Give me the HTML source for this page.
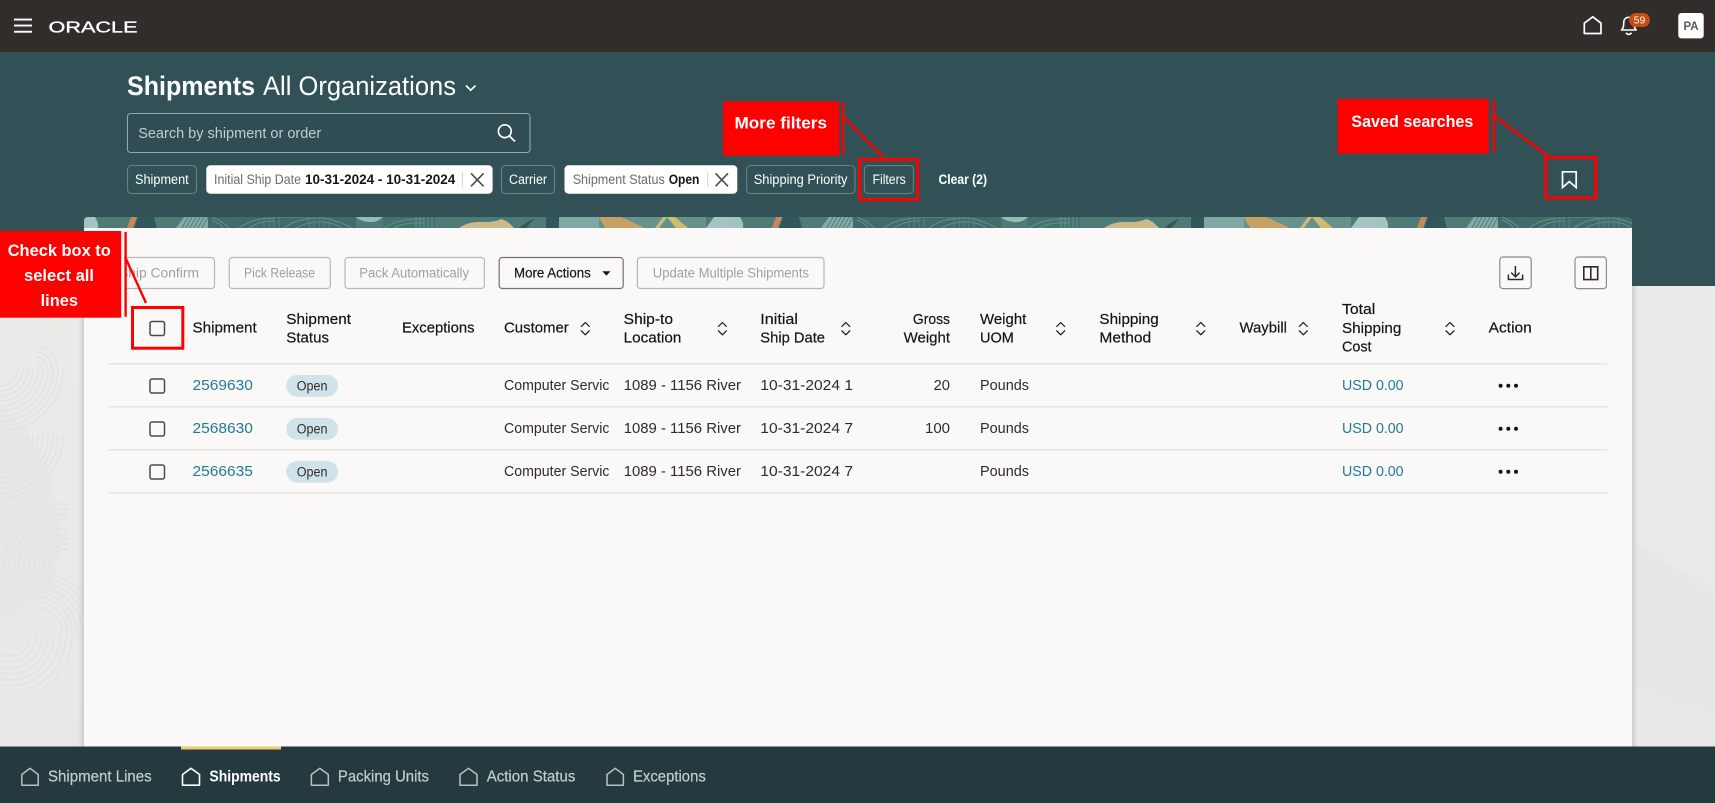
<!DOCTYPE html>
<html lang="en"><head><meta charset="utf-8"><title>Shipments</title>
<style>
html,body{margin:0;padding:0;width:1715px;height:803px;overflow:hidden;background:#ecebe9}
svg{display:block}
text{font-family:"Liberation Sans",sans-serif;white-space:pre}
.h{font-size:15.2px;fill:#161513;stroke:#161513;stroke-width:.2}
.d{font-size:15.2px;fill:#2f2c2a}
.l{font-size:15.2px;fill:#227a96}
.c{font-size:14.2px;fill:#fff}
.g{font-size:14.2px;fill:#6f6c69}
.b{font-size:14.2px;fill:#161513;font-weight:bold}
.dis{font-size:14.2px;fill:#a3a09d}
.btn{fill:none;stroke:#b9b7b4;stroke-width:1.2}
.chip{fill:none;stroke:#67827f;stroke-width:1.1}
.red{font-size:17px;font-weight:bold;fill:#fff}
.rb{fill:none;stroke:#f00;stroke-width:3}
.rl{stroke:#f00;stroke-width:2.4;fill:none}
.s{fill:none;stroke:#161513;stroke-width:1.2;stroke-linecap:round;stroke-linejoin:round}
.cb{fill:none;stroke:#4c4a48;stroke-width:1.5}
.t{font-size:15.6px;fill:#c3cdce;stroke:#c3cdce;stroke-width:.2}
.ti{fill:none;stroke:#b6c3c4;stroke-width:1.5;stroke-linejoin:round}
.o{fill:#d0e2ea}
.p{font-size:14.2px;fill:#2f2c2a}
.arc{fill:none;stroke:#e4e3e1;stroke-width:1.6}
</style></head><body>
<svg width="1715" height="803" viewBox="0 0 1715 803" xmlns="http://www.w3.org/2000/svg">
<defs>
<linearGradient id="bg" x1="0" x2="0" y1="0" y2="1"><stop offset="0" stop-color="#eeedeb"/><stop offset="1" stop-color="#e9e8e6"/></linearGradient>
<linearGradient id="sl" x1="0" x2="1" y1="0" y2="0"><stop offset="0" stop-color="#d0cfcd" stop-opacity="0"/><stop offset="1" stop-color="#cfcecc"/></linearGradient>
<linearGradient id="sr" x1="1" x2="0" y1="0" y2="0"><stop offset="0" stop-color="#d0cfcd" stop-opacity="0"/><stop offset="1" stop-color="#cfcecc"/></linearGradient>
<clipPath id="a0"><rect x="36" y="347" width="48" height="21"/></clipPath>
<clipPath id="a1"><rect x="0" y="368" width="68" height="66"/></clipPath>
<clipPath id="a2"><rect x="0" y="435" width="68" height="67"/></clipPath>
<clipPath id="a3"><rect x="0" y="503" width="68" height="65"/></clipPath>
<clipPath id="a4"><rect x="36" y="570" width="48" height="65"/></clipPath>
<clipPath id="a5"><rect x="0" y="636" width="84" height="52"/></clipPath>
<clipPath id="cs"><rect x="500" y="375" width="108.6" height="110"/></clipPath>
<clipPath id="st"><path d="M84 228V221q0-4 4-4H1628q4 0 4 4V228Z"/></clipPath>
<pattern id="tile" x="84" y="217" width="645" height="11" patternUnits="userSpaceOnUse">
<rect width="645" height="11" fill="#527f7a"/>
<path d="M0 0H11Q15 6 14 11H0Z" fill="#b9d5d3"/>
<path d="M47 0H53L49 11H43Z" fill="#e58e55"/>
<path d="M54 0H70L73 11H50Z" fill="#2f5155"/>
<path d="M92 11L100 0H124V11Z" fill="#93b8b5"/>
<path d="M98 11l6-11M102 11l6-11M106 11l6-11M110 11l6-11M114 11l6-11M118 11l6-11" stroke="#55817d" stroke-width="1"/>
<rect x="124" y="0" width="148" height="11" fill="#3f6d6b"/>
<path d="M128 0Q140 5 145 11M128 3Q136 6 139 11M155 11Q168 1 190 1M165 11Q175 4 190 4M190 0H225M200 11Q215 0 240 1Q255 4 268 11M212 11Q225 4 240 5Q250 6 258 11" stroke="#6c9692" fill="none" stroke-width="1"/>
<path d="M180 0v11M185 0v11M190 0v11M195 0v11M225 0v11M230 0v11M235 0v11M240 0v11M245 0v11" stroke="#5f8c88" stroke-width=".8"/>
<path d="M272 0H299Q293 6 285 5Q276 4 272 0Z" fill="#a9cdca"/>
<rect x="299" y="0" width="52" height="11" fill="#44726f"/>
<path d="M300 11Q315 1 340 2M310 11Q320 5 340 6" stroke="#6c9692" fill="none"/>
<path d="M332 0v11M336 0v11M340 0v11M344 0v11M348 0v11" stroke="#7aa29e" stroke-width=".8"/>
<path d="M375 11Q385 4 400 5Q412 5 417 2Q423 3 430 11Z" fill="#eccb91"/>
<path d="M435 11Q445 3 450 2L453 11Z" fill="#2f5155"/>
<path d="M452 0H463V11H442Z" fill="#527f7a"/>
<rect x="462" y="0" width="13" height="11" fill="#2f5155"/>
<rect x="475" y="0" width="40" height="11" fill="#8fb4b1"/>
<rect x="515" y="0" width="107" height="11" fill="#6f9a93"/>
<path d="M515 0H537L557 9L560 11H521Z" fill="#e3ad62"/>
<path d="M579 0H583L575 11H571Z" fill="#f0cc71"/>
<path d="M583 0H591L604 11H592Z" fill="#f0cc71"/>
<path d="M622 11L630 0H645V11Z" fill="#bcd8d8"/>
</pattern>
</defs>

<!-- page background -->
<rect width="1715" height="803" fill="url(#bg)"/>
<path d="M0 405L30 435L48 470L56 500L62 540L50 590L20 615L0 625Z" fill="#e8e7e5"/>
<g class="arc">
<g clip-path="url(#a0)"><circle cx="36" cy="368" r="6"/><circle cx="36" cy="368" r="11"/><circle cx="36" cy="368" r="16"/><circle cx="36" cy="368" r="21"/></g>
<g clip-path="url(#a1)"><circle cx="0" cy="368" r="18"/><circle cx="0" cy="368" r="23"/><circle cx="0" cy="368" r="28"/><circle cx="0" cy="368" r="33"/><circle cx="0" cy="368" r="38"/><circle cx="0" cy="368" r="43"/><circle cx="0" cy="368" r="48"/><circle cx="0" cy="368" r="53"/><circle cx="0" cy="368" r="58"/><circle cx="0" cy="368" r="63"/></g>
<g clip-path="url(#a2)"><circle cx="0" cy="435" r="18"/><circle cx="0" cy="435" r="23"/><circle cx="0" cy="435" r="28"/><circle cx="0" cy="435" r="33"/><circle cx="0" cy="435" r="38"/><circle cx="0" cy="435" r="43"/><circle cx="0" cy="435" r="48"/><circle cx="0" cy="435" r="53"/><circle cx="0" cy="435" r="58"/><circle cx="0" cy="435" r="63"/></g>
<g clip-path="url(#a3)"><circle cx="67" cy="567" r="18"/><circle cx="67" cy="567" r="23"/><circle cx="67" cy="567" r="28"/><circle cx="67" cy="567" r="33"/><circle cx="67" cy="567" r="38"/><circle cx="67" cy="567" r="43"/><circle cx="67" cy="567" r="48"/><circle cx="67" cy="567" r="53"/><circle cx="67" cy="567" r="58"/><circle cx="67" cy="567" r="63"/></g>
<g clip-path="url(#a4)"><circle cx="36" cy="633" r="26"/><circle cx="36" cy="633" r="31"/><circle cx="36" cy="633" r="36"/><circle cx="36" cy="633" r="41"/><circle cx="36" cy="633" r="46"/><circle cx="36" cy="633" r="51"/><circle cx="36" cy="633" r="56"/><circle cx="36" cy="633" r="61"/></g>
<g clip-path="url(#a5)"><circle cx="10" cy="636" r="20"/><circle cx="10" cy="636" r="26"/><circle cx="10" cy="636" r="32"/><circle cx="10" cy="636" r="38"/><circle cx="10" cy="636" r="44"/><circle cx="10" cy="636" r="50"/><circle cx="10" cy="636" r="56"/><circle cx="10" cy="636" r="62"/></g>
</g>
<path d="M1632 540L1715 593V713Q1670 708 1632 683Z" fill="#e8e7e5"/>

<!-- header bands -->
<rect y="52" width="1715" height="234" fill="#325156"/>
<rect width="1715" height="52" fill="#312d2a"/>
<g fill="#fff"><rect x="14" y="18.6" width="18" height="1.9"/><rect x="14" y="24.6" width="18" height="1.9"/><rect x="14" y="30.8" width="18" height="1.9"/></g>
<text x="48.5" y="32.3" font-size="16" fill="#fff" stroke="#fff" stroke-width=".35" textLength="89" lengthAdjust="spacingAndGlyphs">ORACLE</text>
<path d="M1584.3 33.5V23.2L1592.8 16.8L1601 23.2V33.5Z" fill="none" stroke="#fff" stroke-width="1.7" stroke-linejoin="round"/>
<path d="M1621.5 30C1623.5 28 1623.7 26 1623.7 23C1623.7 19.5 1625.5 17.3 1628.7 17.3C1632 17.3 1634 19.5 1634 23C1634 26 1634.2 28 1636.2 30Z" fill="none" stroke="#fff" stroke-width="1.6" stroke-linejoin="round"/>
<path d="M1626 32.8Q1628.7 36 1631.5 32.8" fill="none" stroke="#fff" stroke-width="1.6"/>
<rect x="1629" y="13" width="21" height="14" rx="7" fill="#c84b12"/>
<text x="1639.5" y="23.6" font-size="10.5" fill="#fff" text-anchor="middle">59</text>
<rect x="1678.3" y="13" width="25.4" height="25.4" rx="3" fill="#fff"/>
<text x="1691" y="30" font-size="11.5" font-weight="bold" fill="#5c5a58" text-anchor="middle">PA</text>

<!-- title -->
<text x="127" y="95" font-size="26.5" font-weight="bold" fill="#fff" textLength="128" lengthAdjust="spacingAndGlyphs">Shipments</text>
<text x="263" y="95" font-size="26.5" fill="#fff" textLength="193" lengthAdjust="spacingAndGlyphs">All Organizations</text>
<path d="M466 85.5L470.7 90.2L475.5 85.5" fill="none" stroke="#fff" stroke-width="1.6"/>

<!-- search -->
<rect x="127.5" y="113.5" width="402.5" height="39" rx="3" fill="#2f4d52" stroke="#93a9ab" stroke-width="1.1"/>
<text x="138.2" y="138" font-size="15.2" fill="#c1cdce" textLength="183" lengthAdjust="spacingAndGlyphs">Search by shipment or order</text>
<circle cx="504.8" cy="131.2" r="6.4" fill="none" stroke="#fff" stroke-width="1.7"/>
<path d="M509.4 136L515 141.5" stroke="#fff" stroke-width="1.7" fill="none"/>

<!-- chips -->
<rect class="chip" x="127.5" y="165.5" width="69" height="28" rx="4"/>
<text class="c" x="135" y="184" textLength="53.7" lengthAdjust="spacingAndGlyphs">Shipment</text>
<rect x="206.3" y="165.3" width="286.3" height="28.4" rx="4" fill="#fff"/>
<text class="g" x="214" y="184" textLength="87" lengthAdjust="spacingAndGlyphs">Initial Ship Date</text>
<text class="b" x="305" y="184" textLength="150.3" lengthAdjust="spacingAndGlyphs">10-31-2024 - 10-31-2024</text>
<rect x="462" y="172" width="1" height="15" fill="#d6d4d1"/>
<path d="M471 173.3L483.6 186.3M483.6 173.3L471 186.3" stroke="#4f4c48" stroke-width="1.6" fill="none"/>
<rect class="chip" x="501.5" y="165.5" width="53" height="28" rx="4"/>
<text class="c" x="509" y="184" textLength="38" lengthAdjust="spacingAndGlyphs">Carrier</text>
<rect x="564.5" y="165.3" width="172.8" height="28.4" rx="4" fill="#fff"/>
<text class="g" x="572.7" y="184" textLength="92.1" lengthAdjust="spacingAndGlyphs">Shipment Status</text>
<text class="b" x="668.7" y="184" textLength="30.7" lengthAdjust="spacingAndGlyphs">Open</text>
<rect x="707.2" y="172" width="1" height="15" fill="#d6d4d1"/>
<path d="M715.5 173.3L728 186.3M728 173.3L715.5 186.3" stroke="#4f4c48" stroke-width="1.6" fill="none"/>
<rect class="chip" x="746.6" y="165.5" width="108.4" height="28" rx="4"/>
<text class="c" x="753.7" y="184" textLength="93.8" lengthAdjust="spacingAndGlyphs">Shipping Priority</text>
<rect class="chip" x="864.4" y="165.5" width="49" height="28" rx="4"/>
<text class="c" x="872.5" y="184" textLength="33.3" lengthAdjust="spacingAndGlyphs">Filters</text>
<text x="938.5" y="184" font-size="14.2" font-weight="bold" fill="#fff" textLength="48.5" lengthAdjust="spacingAndGlyphs">Clear (2)</text>
<path d="M1562.5 171.8H1576.2V187.5L1569.3 181.6L1562.5 187.5Z" fill="none" stroke="#fff" stroke-width="1.7"/>

<!-- card -->
<rect x="78" y="286" width="6" height="461" fill="url(#sl)"/>
<rect x="1632" y="286" width="6" height="461" fill="url(#sr)"/>
<rect x="84" y="217" width="1548" height="11" fill="#3f6a6b" clip-path="url(#st)"/>
<rect x="84" y="217" width="1548" height="11" fill="url(#tile)" clip-path="url(#st)" opacity=".82"/>
<rect x="84" y="228" width="1548" height="520" fill="#faf9f8"/>

<!-- toolbar -->
<rect class="btn" x="112" y="257.5" width="102.5" height="31" rx="3"/>
<text class="dis" x="119" y="277.3" textLength="80" lengthAdjust="spacingAndGlyphs">Ship Confirm</text>
<rect x="121" y="240" width="5" height="60" fill="#faf9f8"/>
<rect class="btn" x="229.3" y="257.5" width="101" height="31" rx="3"/>
<text class="dis" x="244" y="277.3" textLength="71" lengthAdjust="spacingAndGlyphs">Pick Release</text>
<rect class="btn" x="345" y="257.5" width="139.4" height="31" rx="3"/>
<text class="dis" x="359.3" y="277.3" textLength="109.7" lengthAdjust="spacingAndGlyphs">Pack Automatically</text>
<rect x="499.2" y="257.5" width="124" height="31" rx="3" fill="none" stroke="#75726f" stroke-width="1.2"/>
<text x="514" y="277.3" font-size="14.2" fill="#161513" stroke="#161513" stroke-width=".2" textLength="76.8" lengthAdjust="spacingAndGlyphs">More Actions</text>
<path d="M602.3 271.2H610.5L606.4 275.6Z" fill="#161513"/>
<rect class="btn" x="637.4" y="257.5" width="186.6" height="31" rx="3"/>
<text class="dis" x="652.8" y="277.3" textLength="156.2" lengthAdjust="spacingAndGlyphs">Update Multiple Shipments</text>
<rect x="1499.8" y="257" width="31.4" height="31.6" rx="3" fill="none" stroke="#8d8b88" stroke-width="1.2"/>
<path d="M1515.4 266V276.5M1511.2 272.6L1515.4 276.8L1519.6 272.6M1508.4 274.5V279.5H1522.6V274.5" fill="none" stroke="#2f2c2a" stroke-width="1.5"/>
<rect x="1575" y="257" width="31.4" height="31.6" rx="3" fill="none" stroke="#8d8b88" stroke-width="1.2"/>
<path d="M1583.8 266.8H1597.7V279.6H1583.8ZM1590.8 266.8V279.6" fill="none" stroke="#2f2c2a" stroke-width="1.6"/>

<!-- table header -->
<rect class="cb" x="150" y="321.5" width="14.5" height="14" rx="2"/>
<text class="h" x="192.5" y="332.7" textLength="64.2" lengthAdjust="spacingAndGlyphs">Shipment</text>
<text class="h" x="286.3" y="324" textLength="64.7" lengthAdjust="spacingAndGlyphs">Shipment</text>
<text class="h" x="286.3" y="342.7" textLength="42.7" lengthAdjust="spacingAndGlyphs">Status</text>
<text class="h" x="402" y="332.7" textLength="72.5" lengthAdjust="spacingAndGlyphs">Exceptions</text>
<text class="h" x="504" y="332.7" textLength="64.8" lengthAdjust="spacingAndGlyphs">Customer</text>
<path class="s" d="M581.3 326.5L585.3 322.5L589.3 326.5M581.3 330.8L585.3 334.8L589.3 330.8"/>
<text class="h" x="623.7" y="324" textLength="49.3" lengthAdjust="spacingAndGlyphs">Ship-to</text>
<text class="h" x="623.7" y="342.7" textLength="57.6" lengthAdjust="spacingAndGlyphs">Location</text>
<path class="s" d="M718.4 326.5L722.4 322.5L726.4 326.5M718.4 330.8L722.4 334.8L726.4 330.8"/>
<text class="h" x="760.3" y="324" textLength="37.7" lengthAdjust="spacingAndGlyphs">Initial</text>
<text class="h" x="760.3" y="342.7" textLength="64.7" lengthAdjust="spacingAndGlyphs">Ship Date</text>
<path class="s" d="M841.8 326.5L845.8 322.5L849.8 326.5M841.8 330.8L845.8 334.8L849.8 330.8"/>
<text class="h" x="912.9" y="324" textLength="37.1" lengthAdjust="spacingAndGlyphs">Gross</text>
<text class="h" x="903.6" y="342.7" textLength="46.4" lengthAdjust="spacingAndGlyphs">Weight</text>
<text class="h" x="980" y="324" textLength="46.3" lengthAdjust="spacingAndGlyphs">Weight</text>
<text class="h" x="980" y="342.7" textLength="33.8" lengthAdjust="spacingAndGlyphs">UOM</text>
<path class="s" d="M1056.7 326.5L1060.7 322.5L1064.7 326.5M1056.7 330.8L1060.7 334.8L1064.7 330.8"/>
<text class="h" x="1099.4" y="324" textLength="59.4" lengthAdjust="spacingAndGlyphs">Shipping</text>
<text class="h" x="1099.4" y="342.7" textLength="51.8" lengthAdjust="spacingAndGlyphs">Method</text>
<path class="s" d="M1196.8 326.5L1200.8 322.5L1204.8 326.5M1196.8 330.8L1200.8 334.8L1204.8 330.8"/>
<text class="h" x="1239.5" y="332.7" textLength="47.5" lengthAdjust="spacingAndGlyphs">Waybill</text>
<path class="s" d="M1299.3 326.5L1303.3 322.5L1307.3 326.5M1299.3 330.8L1303.3 334.8L1307.3 330.8"/>
<text class="h" x="1342" y="314" textLength="33.3" lengthAdjust="spacingAndGlyphs">Total</text>
<text class="h" x="1342" y="333" textLength="59.4" lengthAdjust="spacingAndGlyphs">Shipping</text>
<text class="h" x="1342" y="351.7" textLength="29.5" lengthAdjust="spacingAndGlyphs">Cost</text>
<path class="s" d="M1446 326.5L1450 322.5L1454 326.5M1446 330.8L1450 334.8L1454 330.8"/>
<text class="h" x="1488.7" y="332.7" textLength="43.1" lengthAdjust="spacingAndGlyphs">Action</text>

<!-- rules -->
<g fill="#e6e4e1"><rect x="109" y="363" width="1498" height="1.5"/><rect x="109" y="406" width="1498" height="1.5"/><rect x="109" y="449" width="1498" height="1.5"/><rect x="109" y="492" width="1498" height="1.5"/></g>

<!-- row 1 -->
<rect class="cb" x="150" y="379" width="14.5" height="14" rx="2"/>
<text class="l" x="192.5" y="390" textLength="60.4" lengthAdjust="spacingAndGlyphs">2569630</text>
<rect class="o" x="286.3" y="375" width="51.7" height="21.7" rx="10.8"/>
<text class="p" x="296.8" y="390.3" textLength="30.7" lengthAdjust="spacingAndGlyphs">Open</text>
<text class="d" x="504" y="390" textLength="105.5" lengthAdjust="spacingAndGlyphs" clip-path="url(#cs)">Computer Servic</text>
<text class="d" x="623.7" y="390" textLength="117.3" lengthAdjust="spacingAndGlyphs">1089 - 1156 River</text>
<text class="d" x="760.3" y="390" textLength="92.7" lengthAdjust="spacingAndGlyphs">10-31-2024 1</text>
<text class="d" x="933.6" y="390" textLength="16.4" lengthAdjust="spacingAndGlyphs">20</text>
<text class="d" x="980" y="390" textLength="49" lengthAdjust="spacingAndGlyphs">Pounds</text>
<text class="l" x="1342" y="390" textLength="61.6" lengthAdjust="spacingAndGlyphs">USD 0.00</text>
<g fill="#161513"><circle cx="1500.6" cy="385.7" r="2"/><circle cx="1508.3" cy="385.7" r="2"/><circle cx="1516" cy="385.7" r="2"/></g>

<!-- row 2 -->
<rect class="cb" x="150" y="422" width="14.5" height="14" rx="2"/>
<text class="l" x="192.5" y="433" textLength="60.4" lengthAdjust="spacingAndGlyphs">2568630</text>
<rect class="o" x="286.3" y="418" width="51.7" height="21.7" rx="10.8"/>
<text class="p" x="296.8" y="433.3" textLength="30.7" lengthAdjust="spacingAndGlyphs">Open</text>
<text class="d" x="504" y="433" textLength="105.5" lengthAdjust="spacingAndGlyphs" clip-path="url(#cs)">Computer Servic</text>
<text class="d" x="623.7" y="433" textLength="117.3" lengthAdjust="spacingAndGlyphs">1089 - 1156 River</text>
<text class="d" x="760.3" y="433" textLength="92.7" lengthAdjust="spacingAndGlyphs">10-31-2024 7</text>
<text class="d" x="925" y="433" textLength="25" lengthAdjust="spacingAndGlyphs">100</text>
<text class="d" x="980" y="433" textLength="49" lengthAdjust="spacingAndGlyphs">Pounds</text>
<text class="l" x="1342" y="433" textLength="61.6" lengthAdjust="spacingAndGlyphs">USD 0.00</text>
<g fill="#161513"><circle cx="1500.6" cy="428.7" r="2"/><circle cx="1508.3" cy="428.7" r="2"/><circle cx="1516" cy="428.7" r="2"/></g>

<!-- row 3 -->
<rect class="cb" x="150" y="465" width="14.5" height="14" rx="2"/>
<text class="l" x="192.5" y="476" textLength="60.4" lengthAdjust="spacingAndGlyphs">2566635</text>
<rect class="o" x="286.3" y="461" width="51.7" height="21.7" rx="10.8"/>
<text class="p" x="296.8" y="476.3" textLength="30.7" lengthAdjust="spacingAndGlyphs">Open</text>
<text class="d" x="504" y="476" textLength="105.5" lengthAdjust="spacingAndGlyphs" clip-path="url(#cs)">Computer Servic</text>
<text class="d" x="623.7" y="476" textLength="117.3" lengthAdjust="spacingAndGlyphs">1089 - 1156 River</text>
<text class="d" x="760.3" y="476" textLength="92.7" lengthAdjust="spacingAndGlyphs">10-31-2024 7</text>
<text class="d" x="980" y="476" textLength="49" lengthAdjust="spacingAndGlyphs">Pounds</text>
<text class="l" x="1342" y="476" textLength="61.6" lengthAdjust="spacingAndGlyphs">USD 0.00</text>
<g fill="#161513"><circle cx="1500.6" cy="471.7" r="2"/><circle cx="1508.3" cy="471.7" r="2"/><circle cx="1516" cy="471.7" r="2"/></g>

<!-- bottom tabs -->
<rect y="746.5" width="1715" height="56.5" fill="#243a3f"/>
<rect x="181" y="746.5" width="100" height="3" fill="#f0cc71"/>
<path class="ti" d="M21.8 785.2V774.5L30 768.3L38.2 774.5V785.2Z"/>
<text class="t" x="48" y="781.7" textLength="103.7" lengthAdjust="spacingAndGlyphs">Shipment Lines</text>
<path d="M182.5 785.2V774.5L191 768.3L199.5 774.5V785.2Z" fill="none" stroke="#fff" stroke-width="1.6" stroke-linejoin="round"/>
<text x="209.4" y="781.7" font-size="15.6" font-weight="bold" fill="#fff" textLength="71.3" lengthAdjust="spacingAndGlyphs">Shipments</text>
<path class="ti" d="M311.4 785.2V774.5L319.8 768.3L328.3 774.5V785.2Z"/>
<text class="t" x="337.9" y="781.7" textLength="91.1" lengthAdjust="spacingAndGlyphs">Packing Units</text>
<path class="ti" d="M460 785.2V774.5L468.5 768.3L477 774.5V785.2Z"/>
<text class="t" x="486.7" y="781.7" textLength="88.7" lengthAdjust="spacingAndGlyphs">Action Status</text>
<path class="ti" d="M607 785.2V774.5L615.2 768.3L623.4 774.5V785.2Z"/>
<text class="t" x="633" y="781.7" textLength="72.8" lengthAdjust="spacingAndGlyphs">Exceptions</text>

<!-- annotations -->
<rect x="723" y="101.3" width="116.3" height="54.4" fill="#f00"/>
<text class="red" x="734.5" y="128.7" textLength="92.5" lengthAdjust="spacingAndGlyphs">More filters</text>
<path class="rl" d="M843 102V155M843 116.7L883 157"/>
<rect class="rb" x="859.5" y="159.5" width="58" height="40"/>
<rect x="1337.6" y="99" width="151.1" height="54.7" fill="#f00"/>
<text class="red" x="1351.3" y="127" textLength="122.1" lengthAdjust="spacingAndGlyphs">Saved searches</text>
<path class="rl" d="M1494 100V152M1494 116L1548 156"/>
<rect class="rb" x="1545.8" y="157.5" width="49.9" height="40.3"/>
<rect x="0" y="231" width="121.2" height="86.7" fill="#f00"/>
<text class="red" x="7.7" y="256" textLength="103.1" lengthAdjust="spacingAndGlyphs">Check box to</text>
<text class="red" x="24" y="281" textLength="70" lengthAdjust="spacingAndGlyphs">select all</text>
<text class="red" x="40.6" y="306" textLength="37.4" lengthAdjust="spacingAndGlyphs">lines</text>
<path class="rl" d="M125.6 232V316.7M125 256.7L146 303"/>
<rect class="rb" x="132.5" y="307.5" width="50.3" height="40.7"/>
</svg>
</body></html>
